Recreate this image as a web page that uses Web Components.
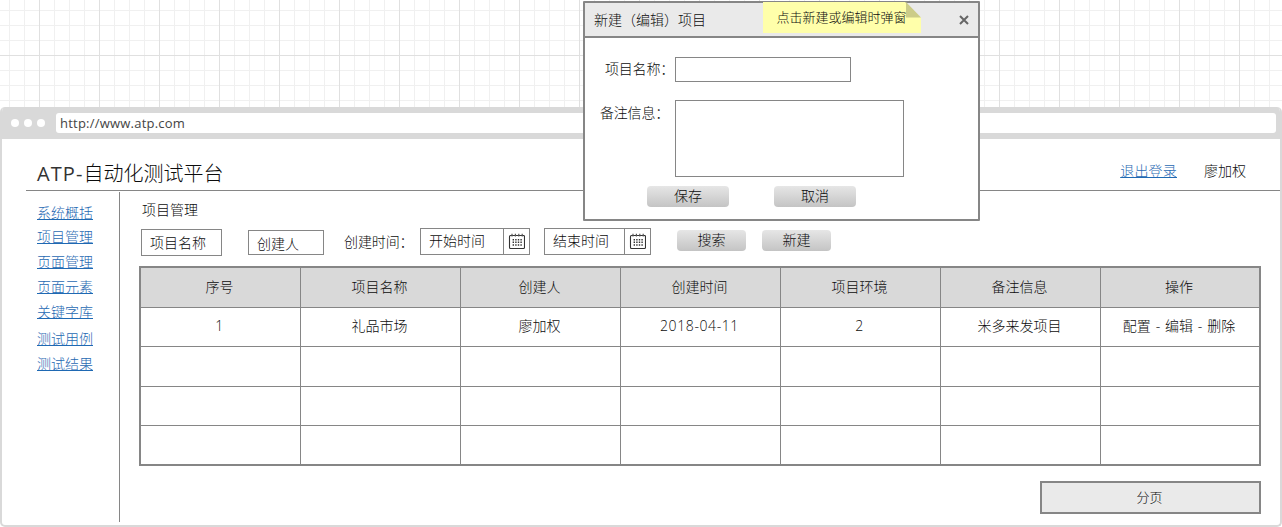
<!DOCTYPE html>
<html lang="zh-CN">
<head>
<meta charset="utf-8">
<title>ATP-自动化测试平台</title>
<style>
html,body{margin:0;height:527px;overflow:hidden}
body{
  font-family:"Open Sans","Noto Sans CJK SC",sans-serif;font-size:14px;font-weight:300;line-height:20px;color:#0c0c0c;
  --line:#868686;--link:#1f69b3;--bar:#d9d9d9;
  background:#fff;
}
</style>
</head>
<body>
<atp-canvas>
  <atp-browser url="http://www.atp.com">
    <atp-header slot="header" prefix="ATP-" name="自动化测试平台" user="廖加权" logout="退出登录"></atp-header>
    <atp-sidebar slot="side"></atp-sidebar>
    <atp-projects></atp-projects>
  </atp-browser>
  <atp-dialog slot="overlay" heading="新建（编辑）项目">
    <atp-note slot="note">点击新建或编辑时弹窗</atp-note>
  </atp-dialog>
</atp-canvas>

<script>
const define = (name, render) => customElements.define(name, class extends HTMLElement {
  constructor() { super(); this.attachShadow({ mode: 'open' }); }
  connectedCallback() {
    this.shadowRoot.innerHTML = '<style>*{box-sizing:border-box}:host{display:block;box-sizing:border-box;white-space:nowrap}</style>' + render(this);
  }
});

/* Wireframe canvas with a 15px grid and a stronger line every 60px */
define('atp-canvas', () => `
<style>
:host{height:527px;position:relative;padding-top:107px;
 background-color:#fff;
 background-image:
  linear-gradient(90deg,#e0e0e0 1px,transparent 1px),
  linear-gradient(#e0e0e0 1px,transparent 1px),
  linear-gradient(90deg,#f0f0f0 1px,transparent 1px),
  linear-gradient(#f0f0f0 1px,transparent 1px);
 background-size:60px 60px,60px 60px,15px 15px,15px 15px;
 background-position:39px 0,0 55px,9px 0,0 10px}
</style><slot></slot><slot name="overlay"></slot>`);

define('atp-browser', el => `
<style>
:host{height:420px;border:2px solid var(--bar);border-top:0;border-radius:5px;background:#fff;
 display:flex;flex-direction:column;overflow:hidden}
.bar{height:32px;flex:none;background:var(--bar);display:flex;align-items:center;padding:0 4px 0 9px}
.dots{display:flex;gap:5px;margin-right:11px}
.dots i{width:8px;height:8px;border-radius:50%;background:#fff}
.url{flex:1;height:20px;background:#fff;border-radius:3px;padding-left:4px;line-height:21px;font-size:13px;font-weight:400;color:#444;letter-spacing:.22px}
.body{display:flex;flex:1;padding:1px 0 3px 24px}
.side{width:94px;border-right:1px solid var(--line)}
main{flex:1}
</style>
<div class="bar"><div class="dots"><i></i><i></i><i></i></div><div class="url">${el.getAttribute('url')}</div></div>
<slot name="header"></slot>
<div class="body"><div class="side"><slot name="side"></slot></div><main><slot></slot></main></div>`);

define('atp-header', el => `
<style>
:host{height:52px;flex:none;margin-left:24px;border-bottom:1px solid var(--line);display:flex;padding-left:11px;padding-right:34px}
h1{margin:0;font-size:20px;font-weight:inherit;line-height:30px;padding-top:20px;flex:1}
h1 b{font-weight:400;letter-spacing:1.1px;color:#333}
a{color:var(--link);text-decoration:underline;padding-top:22px;margin-right:27px;letter-spacing:.2px}
span{padding-top:22px}
</style>
<h1><b>${el.getAttribute('prefix')}</b>${el.getAttribute('name')}</h1><a>${el.getAttribute('logout')}</a><span>${el.getAttribute('user')}</span>`);

define('atp-sidebar', () => `
<style>
nav{display:grid;grid-template-rows:24px 25px 25px 25px 27px 25px 25px;padding:11px 0 0 11px}
a{color:var(--link);text-decoration:underline;line-height:20px;justify-self:start}
</style>
<nav>${['系统概括','项目管理','页面管理','页面元素','关键字库','测试用例','测试结果'].map(t => `<a>${t}</a>`).join('')}</nav>`);

define('atp-button', () => `
<style>
:host{height:21px;border-radius:4px;background:linear-gradient(#e6e6e6,#c4c4c4);text-align:center;line-height:20px}
</style><slot></slot>`);

define('atp-field', () => `
<style>:host{border:1px solid var(--line);background:#fff;padding-left:8px}</style><slot></slot>`);

define('atp-date', () => `
<style>
:host{height:27px;border:1px solid var(--line);display:flex;background:#fff}
.t{flex:1;padding-left:8px;line-height:24px}
.c{width:26px;border-left:1px solid var(--line);display:flex;align-items:center;justify-content:center}
svg{display:block}
</style>
<div class="t"><slot></slot></div>
<div class="c"><svg width="17" height="17" viewBox="0 0 17 17" fill="none" stroke="#333">
<rect x="1.5" y="2.5" width="15" height="13" rx="1" stroke-width="1.1"/>
<path d="M4 .7v2.8M7.4 .7v2.8M10.8 .7v2.8M14.2 .7v2.8" stroke="#555" stroke-width="1.2"/>
<path d="M4.6 6.7h9.2M4.6 9.3h9.2M4.6 12h9.2" stroke-width="1.5" stroke-dasharray="1.4 1.2"/></svg></div>`);

define('atp-table', () => {
  const rows = [
    ['序号','项目名称','创建人','创建时间','项目环境','备注信息','操作'],
    ['1','礼品市场','廖加权','2018-04-11','2','米多来发项目','配置 - 编辑 - 删除'],
    Array(7).fill(''), Array(7).fill(''), Array(7).fill('')];
  return `
<style>
:host{border:2px solid var(--line);display:grid;grid-template-columns:repeat(6,160px) 158px;grid-template-rows:40px 39px 40px 39px 38px;background:#fff;word-spacing:1.2px}
div{border-right:1px solid var(--line);border-bottom:1px solid var(--line);display:flex;align-items:center;justify-content:center;padding:0 2px 2px 0}
.last{border-right:0}.foot{border-bottom:0}.head{background:var(--bar)}
.num{letter-spacing:.6px}
</style>` + rows.map((r, i) => r.map((t, j) =>
    `<div class="${i ? '' : 'head'} ${j === 6 ? 'last' : ''} ${i === 4 ? 'foot' : ''} ${/^[\d-]+$/.test(t) ? 'num' : ''}">${t}</div>`).join('')).join('');
});

define('atp-projects', () => `
<style>
:host{padding:8px 19px 0 20px;display:flex;flex-direction:column;margin-left:-1px}
h2{margin:0 0 0 3px;font:inherit;height:20px}
.filters{display:flex;align-items:flex-start;margin:8px 0 11px 2px;height:27px}
.name{width:81px;height:27px;line-height:26px;margin-top:1px}
.who{width:76px;height:25px;line-height:25px;margin:2px 20px 0 26px}
.label{line-height:27px;width:76px;letter-spacing:-.1px}
.search{width:69px;margin:2px 16px 0 26px}.new{width:69px;margin-top:2px}
.start{width:110px;margin-right:14px}.end{width:107px}
.pager{width:221px;height:33px;margin-top:15px;align-self:flex-end;border:2px solid var(--line);background:#eaeaea;text-align:center;line-height:29px;font-size:13px;padding-right:2px}
</style>
<h2>项目管理</h2>
<div class="filters">
<atp-field class="name">项目名称</atp-field><atp-field class="who">创建人</atp-field>
<span class="label">创建时间：</span>
<atp-date class="start">开始时间</atp-date><atp-date class="end">结束时间</atp-date>
<atp-button class="search">搜索</atp-button><atp-button class="new">新建</atp-button>
</div>
<atp-table></atp-table>
<div class="pager">分页</div>`);

define('atp-note', () => `
<style>
:host{width:158px;height:31px;position:relative;background:linear-gradient(225deg,transparent 11px,#ffffaa 11.5px);text-align:center;font-size:13px;line-height:31px;padding-right:1px}
svg{position:absolute;right:0;top:0;z-index:-1}
</style><svg width="16" height="16"><path d="M1 0V15.5H16Z" fill="#cccc88"/></svg><slot></slot>`);

define('atp-dialog', el => `
<style>
:host{position:absolute;left:583px;top:1px;width:397px;height:220px;border:2px solid var(--line);border-radius:1px;background:#fff}
header{height:35px;background:#eaeaea;border-bottom:2px solid var(--line);display:flex;align-items:center;justify-content:space-between;padding:0 9px}
::slotted(*){position:absolute!important;left:178px;top:-1px;isolation:isolate}
.form{display:grid;grid-template-columns:74px 229px;column-gap:0;grid-template-rows:25px 77px;row-gap:18px;padding:19px 0 0 16px}
label{line-height:24px;padding-left:4px;letter-spacing:-.2px}
label+div+label{padding-left:0;line-height:25px;margin-left:-1px}
.in{width:176px;border:1px solid var(--line)}
.ta{border:1px solid var(--line)}
.btns{display:flex;gap:45px;margin:9px 0 0 62px}
.btns atp-button{width:82px}
</style>
<header><span>${el.getAttribute('heading')}</span>
<svg width="10" height="10" viewBox="0 0 10 10"><path d="M1 1l8 8M9 1l-8 8" stroke="#666" stroke-width="2"/></svg></header>
<div class="form"><label>项目名称：</label><div class="in"></div><label>备注信息：</label><div class="ta"></div></div>
<div class="btns"><atp-button>保存</atp-button><atp-button>取消</atp-button></div>
<slot name="note"></slot>`);
</script>
</body>
</html>
